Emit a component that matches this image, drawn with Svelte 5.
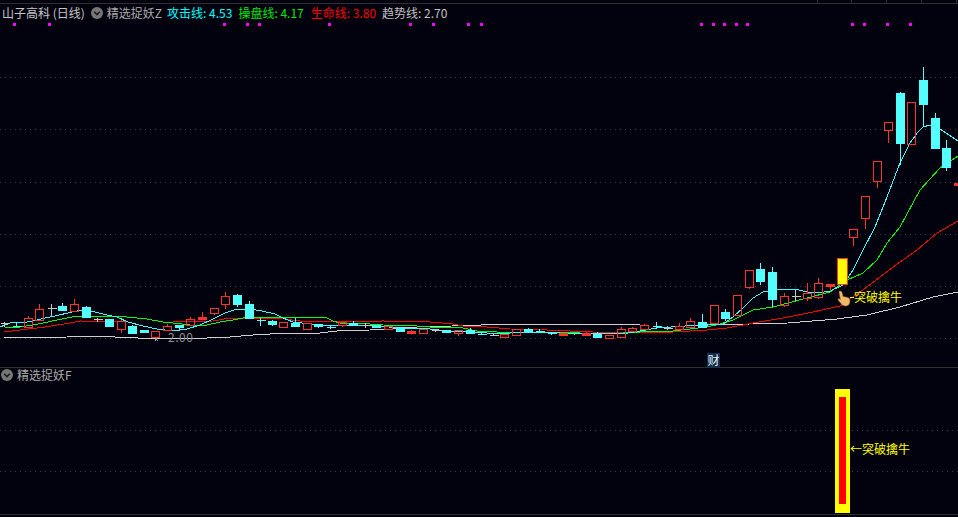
<script lang="ts">
  // candles: [kind, bodyTop, bodyBottom, wickTop, wickBottom]
  // r hollow red, R solid red, c solid cyan, w white cross, k cyan cross, y yellow signal
  type Candle = [string, number, number, number?, number?];
  const candles: Candle[] = [
    ['w',323,323,322,327],['k',326,326,322,327],['r',318,327,316],['r',309,320,304],['w',308,308,304,316],
    ['c',306,310,303],['r',304,311,299],['c',307,317,306,318],['w',319,319,318,322],['c',319,326,319,327],
    ['r',321,329,320,333],['c',326,333,325],['c',330,332,330,333],['r',331,337,331,338],['r',326,330,324],
    ['c',325,327,325,331],['r',319,325,317],['R',317,319,312],['r',308,313,308,315],
    ['r',296,304,292,309],['c',295,304,294,307],['c',304,318,301],['k',320,320,318,326],['c',321,324,320,326],
    ['r',322,327],['c',323,326,318,327],['r',323,329],['c',324,326,324,328],
    ['k',327,327,325,329],['r',322,325,322,327],['c',323,325,321],['w',325,325,323,328],['c',325,327,325,328],
    ['r',326,329],['c',327,331,327,332],['R',331,333,330],['r',329,333],['w',330,330,329,332],['c',330,332,330,333],
    ['r',330,333,330,336],['c',330,333,328,334],['k',334,334,332,335],['w',335,335,333,336],['r',334,337,334,338],
    ['r',329,335],['c',329,331,328,333],['k',331,331,329,333],['k',333,333,332,335],['R',333,335],['k',333,333,333,335],
    ['R',333,335,332],['c',333,337,332],['r',335,338],['r',329,337,327],['r',328,331,327,332],
    ['r',325,329,324],['k',326,326,322,329],['w',328,328,326,330],['r',326,329,323],['r',321,327,318],
    ['c',322,327,314],['r',305,323],['c',312,318,309,321],['r',295,315],['r',270,287,270,289],
    ['c',269,281,263,285],['c',272,299,267,307],['r',296,305,293,307],['w',296,296,290,301],['r',293,298,283,301],
    ['r',283,297,278,299],['R',284,286,284,291],['y',258,284],['r',229,237,229,246],['r',196,218,196,229],
    ['r',161,181,161,188],['r',122,130,122,143],['c',93,143,92,165],['r',102,144],['c',80,104,67,127],
    ['c',118,148,113],['c',148,167,140,171],['R',183,185]
  ];
  const colX = (i: number) => Math.round(4.3 + 11.63 * i);
  const isCross = (kind: string) => kind === 'w' || kind === 'k';

  const cyanLine = '0,327 10,323 27,322 33,321 45,318 55,316 72,312 83,310 95,312 107,315 117,317 128,322 143,326 157,329 173,331 187,329 200,325 213,319 225,313 237,309 250,309 262,311 275,314 283,318 293,322 320,325 353,325 377,326 400,328 430,329 447,331 470,332 487,333 510,333 537,332 560,333 580,333 610,334 628,333 640,331 657,328 685,326 708,325 723,324 733,317 743,308 753,298 763,292 780,289 795,289 807,292 818,293 830,291 843,285 853,270 863,250 875,227 887,197 900,163 910,143 918,132 923,127 930,125 940,129 958,141';
  const greenLine = '5,327 20,327 33,325 43,323 57,320 72,317 90,316 127,317 147,319 163,322 173,323 190,325 207,325 220,322 233,320 243,318 267,317 313,317 320,317 327,318 333,321 340,323 370,324 383,325 417,326 430,327 463,328 477,331 497,332 517,332 533,332 567,332 580,333 607,334 640,332 673,331 707,327 720,324 733,320 743,315 753,310 773,307 807,298 830,292 847,280 863,273 877,260 887,243 900,227 920,190 940,168 958,156';
  const redLine = '4,332 20,330 45,327 70,323 80,321 127,322 173,322 213,321 230,318 277,318 300,321 320,322 383,321 430,322 453,324 463,326 487,327 510,329 547,330 570,331 593,332 640,332 673,332 707,330 727,328 753,323 783,318 813,312 840,306 867,287 893,267 917,250 937,233 958,221';
  const whiteLine = '4,338 67,337 92,336 138,338 207,338 230,337 253,335 288,333 312,333 320,333 337,331 370,330 393,329 417,327 452,326 510,324 580,324 640,325 700,325 750,324 788,323 837,319 867,315 900,307 933,297 958,292';

  const topDots = [14,49,224,247,259,329,410,433,468,481,701,713,724,736,747,852,864,887,910];
  const topGrid = [77,129,182,234,286,338];
  const topTicks = [817,851,886,921,956];
</script>

<div class="screen">
  <section class="panel main">
    <svg width="958" height="367" viewBox="0 0 958 367" shape-rendering="crispEdges">
      <line class="frame" x1="0" y1="3.5" x2="958" y2="3.5" />
      {#each topTicks as x}
        <line class="frame" x1={x + 0.5} y1="0" x2={x + 0.5} y2="3" />
      {/each}
      {#each topGrid as y}
        <line class="grid" x1="0" y1={y + 0.5} x2="958" y2={y + 0.5} />
      {/each}
      {#each topDots as x}
        <rect class="dot" x={x - 1} y="23" width="3" height="3" />
      {/each}

      <polyline class="ma white" points={whiteLine} />
      <polyline class="ma red" points={redLine} />
      <polyline class="ma green" points={greenLine} />
      <polyline class="ma cyan" points={cyanLine} />

      {#each candles as [kind, top, bottom, wickTop, wickBottom], i}
        {@const cx = colX(i) + 0.5}
        <g class="candle {kind}">
          {#if isCross(kind)}
            <line x1={cx} y1={wickTop} x2={cx} y2={wickBottom} />
            <line x1={cx - 4} y1={top + 0.5} x2={cx + 5} y2={top + 0.5} />
          {:else}
            {#if wickTop !== undefined && wickTop < top}
              <line x1={cx} y1={wickTop} x2={cx} y2={top} />
            {/if}
            {#if wickBottom !== undefined && wickBottom > bottom}
              <line x1={cx} y1={bottom} x2={cx} y2={wickBottom} />
            {/if}
            {#if kind === 'y'}
              <rect x={cx - 5} y={top + 0.5} width="10" height={bottom - top} />
            {:else}
              <rect x={cx - 4} y={top + 0.5} width="8" height={bottom - top} />
            {/if}
          {/if}
        </g>
      {/each}

      <path class="low-arrow" d="M155 338.5 L158 341 M155 338.5 h2 M155 338.5 v2" />
      <text class="low" x="168" y="342">2.00</text>

      <g class="hand" shape-rendering="auto">
        <path d="M839 291.5 C840.5 290.5 842 291.5 842.3 293.5 L843 296.5 L848 297.5 C850.5 298.5 850.5 303 848.5 305 C846 306.8 842.5 306 841 303.5 L838.2 300.2 C837.6 299 838.8 298.4 840 299.2 L840.4 299.6 Z" />
      </g>
      <line class="sig-line" x1="850" y1="297.5" x2="854" y2="297.5" />
      <text class="signal" x="854" y="302">突破擒牛</text>
    </svg>

    <span class="badge">财</span>

    <header class="legend">
      <span class="name">山子高科 (日线)</span>
      <span class="toggle"><svg width="12" height="12" viewBox="0 0 12 12"><path d="M3.2 4.8 6 7.6 8.8 4.8" /></svg></span>
      <span class="formula">精选捉妖Z</span>
      <span class="attack">攻击线: 4.53</span>
      <span class="control">操盘线: 4.17</span>
      <span class="life">生命线: 3.80</span>
      <span class="trend">趋势线: 2.70</span>
    </header>
  </section>

  <section class="panel sub">
    <svg width="958" height="146" viewBox="0 368 958 146" shape-rendering="crispEdges">
      <line class="grid" x1="0" y1="430.5" x2="833" y2="430.5" />
      <line class="grid" x1="852" y1="430.5" x2="958" y2="430.5" />
      <line class="grid" x1="0" y1="471.5" x2="833" y2="471.5" />
      <line class="grid" x1="852" y1="471.5" x2="958" y2="471.5" />
      <rect class="bar-outer" x="835" y="389" width="15" height="124" />
      <rect class="bar-inner" x="839" y="397" width="7" height="107" />
      <text class="signal" x="850" y="454">←突破擒牛</text>
    </svg>
    <header class="legend">
      <span class="toggle"><svg width="12" height="12" viewBox="0 0 12 12"><path d="M3.2 4.8 6 7.6 8.8 4.8" /></svg></span>
      <span class="formula">精选捉妖F</span>
    </header>
  </section>
</div>

<style>
  :global(body) {
    margin: 0;
    background: #02020e;
  }
  .screen {
    width: 958px;
    height: 517px;
    overflow: hidden;
    display: flex;
    flex-direction: column;
    background: #02020e;
    font-family: "Noto Sans CJK SC", "Liberation Sans", sans-serif;
    font-size: 12px;
  }
  .panel {
    position: relative;
  }
  .panel svg {
    display: block;
  }
  .main {
    height: 367px;
    border-bottom: 1px solid #2e2e2e;
  }
  .sub {
    height: 146px;
    border-bottom: 1px solid #2e2e2e;
  }
  .legend {
    position: absolute;
    top: 5px;
    left: 2px;
    display: flex;
    align-items: center;
    height: 16px;
    line-height: 16px;
    white-space: nowrap;
    color: #b4b4b4;
  }
  .sub .legend {
    top: -1px;
    left: 1px;
  }
  .name { color: #c4c4c4; margin-right: 6px; }
  .toggle {
    width: 12px;
    height: 12px;
    border-radius: 50%;
    background: #767676;
    margin-right: 4px;
    display: inline-flex;
  }
  .toggle path {
    fill: none;
    stroke: #1a1a1a;
    stroke-width: 1.5;
  }
  .formula { margin-right: 5px; color: #aaaaaa; }
  .attack { color: #00ffff; margin-right: 6px; }
  .control { color: #00e800; margin-right: 7px; }
  .life { color: #ff0000; margin-right: 6px; }
  .trend { color: #c0c0c0; }
  .badge {
    position: absolute;
    left: 707px;
    top: 353px;
    width: 13px;
    height: 14px;
    line-height: 14px;
    text-align: center;
    background: #0b2f55;
    color: #f0f0f0;
    font-size: 12px;
  }
  .frame { stroke: #2e2e2e; }
  .grid {
    stroke: #3a3a3a;
    stroke-dasharray: 1 4;
  }
  .dot { fill: #ff00ff; }
  .ma {
    fill: none;
    stroke-width: 1;
  }
  .ma.white { stroke: #cfcfcf; }
  .ma.red { stroke: #ff0000; }
  .ma.green { stroke: #00ff00; }
  .ma.cyan { stroke: #33ffff; }
  .candle line { stroke-width: 1; }
  .candle.r line, .candle.R line { stroke: #ff3232; }
  .candle.r rect { fill: none; stroke: #ff3232; }
  .candle.R rect { fill: #ff3232; stroke: #ff3232; }
  .candle.c line { stroke: #54ffff; }
  .candle.c rect { fill: #54ffff; stroke: #54ffff; }
  .candle.w line { stroke: #c8c8c8; }
  .candle.k line { stroke: #54ffff; }
  .candle.y rect { fill: #ffff00; stroke: #ff3232; }
  .low-arrow { fill: none; stroke: #a8a8a8; }
  .low {
    fill: #8c8c8c;
    font-size: 12px;
    letter-spacing: 0.5px;
  }
  .signal {
    fill: #ffff00;
    font-size: 12px;
  }
  .sig-line { stroke: #ffff00; }
  .hand path {
    fill: #f2b968;
    stroke: #a8672a;
    stroke-width: 0.6;
  }
  .bar-outer { fill: #ffff00; }
  .bar-inner { fill: #ff0000; }
</style>
